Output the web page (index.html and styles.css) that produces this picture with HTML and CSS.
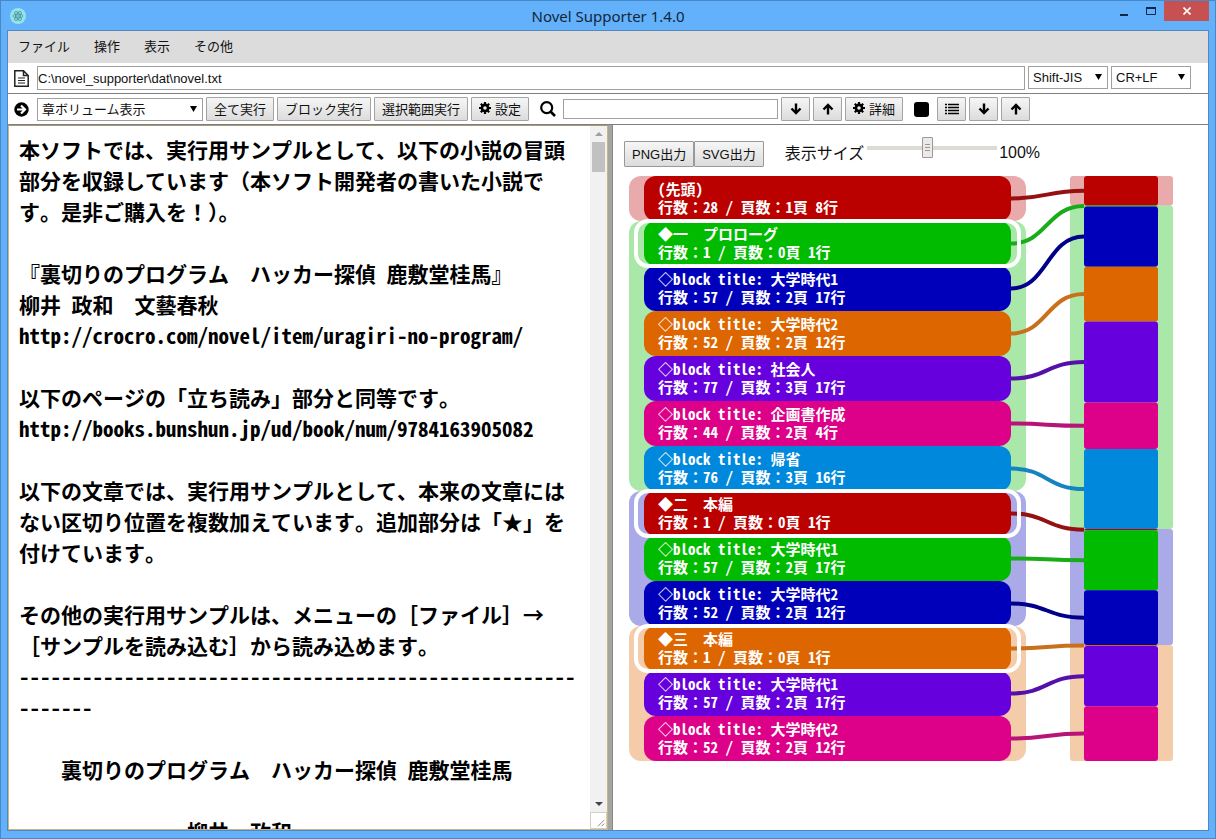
FILE: index.html
```html
<!DOCTYPE html>
<html lang="ja">
<head>
<meta charset="utf-8">
<title>Novel Supporter 1.4.0</title>
<link rel="stylesheet" href="styles.css">
</head>
<body>
<svg class="defs" aria-hidden="true">
  <symbol id="i-down" viewBox="0 0 12 12"><path d="M6 0.500v10M1.500 5.500 6 10l4.500-4.500" fill="none" stroke="#000" stroke-width="2.400"/></symbol>
  <symbol id="i-up" viewBox="0 0 12 12"><path d="M6 11.500V2M1.500 6.500 6 2l4.500 4.500" fill="none" stroke="#000" stroke-width="2.400"/></symbol>
  <symbol id="i-gear" viewBox="0 0 12 12"><circle cx="6" cy="6" r="3.100" fill="none" stroke="#000" stroke-width="2.600"/><path d="M6 0v2.500M6 9.500V12M0 6h2.500M9.500 6H12M1.800 1.800l1.700 1.700M8.500 8.500l1.700 1.700M1.800 10.200l1.700-1.700M8.500 3.500l1.700-1.700" stroke="#000" stroke-width="2.200"/></symbol>
  <symbol id="i-list" viewBox="0 0 14 12"><path d="M0 1.500h2M0 4.500h2M0 7.500h2M0 10.500h2M3 1.500h11M3 4.500h11M3 7.500h11M3 10.500h11" stroke="#000" stroke-width="1.700"/></symbol>
  <symbol id="i-tri" viewBox="0 0 7 6"><path d="M0 0h7L3.500 6z" fill="#000"/></symbol>
</svg>
<div class="window">
  <header class="titlebar">
    <svg class="app-icon" viewBox="0 0 16 16" aria-hidden="true"><circle cx="8" cy="8" r="8" fill="#93e4ea"/><g fill="none" stroke="#4b8f96" stroke-width=".8"><ellipse cx="8" cy="8" rx="5.200" ry="2"/><ellipse cx="8" cy="8" rx="5.200" ry="2" transform="rotate(60 8 8)"/><ellipse cx="8" cy="8" rx="5.200" ry="2" transform="rotate(120 8 8)"/></g><circle cx="8" cy="8" r=".8" fill="#4b8f96"/></svg>
    <h1 class="title">Novel Supporter 1.4.0</h1>
    <div class="controls">
      <button class="ctl" aria-label="最小化"><svg width="10" height="12" viewBox="0 0 10 12"><path d="M1 10h8" stroke="#0b2a4a" stroke-width="2"/></svg></button>
      <button class="ctl" aria-label="最大化"><svg width="10" height="12" viewBox="0 0 10 12"><path d="M.5 2v7.500h9V2" fill="none" stroke="#0b2a4a"/><path d="M0 3h10" stroke="#0b2a4a" stroke-width="2"/></svg></button>
      <button class="ctl ctl-close" aria-label="閉じる"><svg width="8" height="8" viewBox="0 0 8 8"><path d="M.5.5l7 7M7.500.5l-7 7" stroke="#fff" stroke-width="1.600"/></svg></button>
    </div>
  </header>
  <main class="client">
    <nav class="menubar">
      <button class="menu">ファイル</button><button class="menu">操作</button><button class="menu">表示</button><button class="menu">その他</button>
    </nav>
    <div class="bar pathbar">
      <svg class="lead" viewBox="0 0 15 17" aria-hidden="true"><path d="M.8.8h8.700l4.700 4.700v10.700H.8zM9.500.8v4.700h4.700" fill="none" stroke="#222" stroke-width="1.500"/><path d="M4 8h7M4 10.500h7M4 13h7" stroke="#222" stroke-width="1.200"/></svg>
      <input class="field path" type="text" aria-label="ファイルパス" value="C:\novel_supporter\dat\novel.txt">
      <span class="drop drop-code"><select aria-label="文字コード"><option>Shift-JIS</option></select><svg><use href="#i-tri"/></svg></span>
      <span class="drop drop-code"><select aria-label="改行コード"><option>CR+LF</option></select><svg><use href="#i-tri"/></svg></span>
    </div>
    <div class="bar toolbar">
      <svg class="lead" viewBox="0 0 15 17" aria-hidden="true"><circle cx="7.500" cy="8.500" r="7.200"/><path d="M3 8.500h7.500M7 4.500l4 4-4 4" fill="none" stroke="#fff" stroke-width="2.200"/></svg>
      <span class="drop drop-mode"><select aria-label="処理"><option>章ボリューム表示</option></select><svg><use href="#i-tri"/></svg></span>
      <button class="btn">全て実行</button>
      <button class="btn">ブロック実行</button>
      <button class="btn">選択範囲実行</button>
      <button class="btn"><svg class="ico"><use href="#i-gear"/></svg>設定</button>
      <svg class="search-ico" viewBox="0 0 16 16" aria-hidden="true"><circle cx="6.700" cy="6.700" r="5.500" fill="none" stroke="#000" stroke-width="2.200"/><path d="M10.500 10.500l4.500 4.500" stroke="#000" stroke-width="2.600"/></svg>
      <input class="field search" type="text" aria-label="検索">
      <button class="btn btn-icon" aria-label="次を検索"><svg class="ico"><use href="#i-down"/></svg></button>
      <button class="btn btn-icon" aria-label="前を検索"><svg class="ico"><use href="#i-up"/></svg></button>
      <button class="btn"><svg class="ico"><use href="#i-gear"/></svg>詳細</button>
      <span class="swatch"></span>
      <button class="btn btn-icon" aria-label="一覧"><svg class="ico ico-list"><use href="#i-list"/></svg></button>
      <button class="btn btn-icon" aria-label="次へ"><svg class="ico"><use href="#i-down"/></svg></button>
      <button class="btn btn-icon" aria-label="前へ"><svg class="ico"><use href="#i-up"/></svg></button>
    </div>
    <div class="panes">
      <section class="editor">
        <textarea class="text" aria-label="本文" spellcheck="false">本ソフトでは、実行用サンプルとして、以下の小説の冒頭
部分を収録しています（本ソフト開発者の書いた小説で
す。是非ご購入を！）。

『裏切りのプログラム　ハッカー探偵 鹿敷堂桂馬』
柳井 政和　文藝春秋
http://crocro.com/novel/item/uragiri-no-program/

以下のページの「立ち読み」部分と同等です。
http://books.bunshun.jp/ud/book/num/9784163905082

以下の文章では、実行用サンプルとして、本来の文章には
ない区切り位置を複数加えています。追加部分は「★」を
付けています。

その他の実行用サンプルは、メニューの［ファイル］→
［サンプルを読み込む］から読み込めます。
-----------------------------------------------------
-------

　　裏切りのプログラム　ハッカー探偵 鹿敷堂桂馬

　　　　　　　　柳井　政和</textarea>
        <div class="scroll" aria-hidden="true">
          <svg class="arrow" viewBox="0 0 8 4"><path d="M0 4h8L4 0z" fill="#a0a0a0"/></svg>
          <div class="thumb"></div>
          <svg class="arrow arrow-down" viewBox="0 0 8 4"><path d="M0 0h8L4 4z" fill="#444"/></svg>
          <svg class="grip" viewBox="0 0 17 17"><path d="M8 15l7-7M12 15l3-3" stroke="#777"/></svg>
        </div>
      </section>
      <div class="splitter"></div>
      <section class="view">
        <div class="view-tools">
          <button class="btn btn-out">PNG出力</button><button class="btn btn-out">SVG出力</button>
          <label class="size-label" for="size">表示サイズ</label>
          <input class="slider" id="size" type="range" min="10" max="200" value="98">
          <output class="size-value" for="size">100%</output>
        </div>
        <svg class="chart" id="chart" width="544" height="585" role="img" aria-label="章ボリューム"></svg>
      </section>
    </div>
  </main>
</div>
<script src="chart.js"></script>
</body>
</html>
```
FILE: styles.css
```css
* { box-sizing: border-box; }
html, body { height: 100%; margin: 0; }
body { font-family: "Liberation Sans", "Noto Sans CJK JP", sans-serif; font-size: 13px; color: #111; }
button, input, select, textarea { font: inherit; color: inherit; margin: 0; }
svg { display: block; flex: none; }
.defs { position: absolute; width: 0; height: 0; }

.window { display: flex; flex-direction: column; height: 100vh; padding: 0 6px 7px; background: #63b1fb; border: 1px solid #4689c8; }
.titlebar { display: grid; grid-template-columns: 1fr auto 1fr; height: 29px; align-items: center; }
.app-icon { width: 16px; height: 16px; margin-left: 3px; }
.title { margin: 0; font: 400 15px "Noto Sans", "Open Sans", sans-serif; color: #12263c; }
.controls { display: flex; justify-content: flex-end; align-self: start; }
.ctl { display: grid; place-items: center; width: 27px; height: 20px; padding: 0; border: 0; background: none; }
.ctl-close { width: 45px; background: #c75050; }

.client { display: flex; flex-direction: column; flex: 1; min-height: 0; border: 1px solid #5288bd; background: #fff; }
.menubar { display: flex; gap: 24px; height: 32px; padding: 0 10px 4px; background: #dcdcdc; flex: none; }
.menu { padding: 0; border: 0; background: none; }

.bar { display: flex; align-items: center; gap: 3px; height: 31px; padding: 0 17px 0 6px; border-bottom: 1px solid #808080; flex: none; }
.lead { width: 15px; height: 17px; margin-right: 5px; }
.field { min-width: 0; padding: 0 1px; border: 1px solid #a0a0a0; background: #fff; outline: 0; }
.path { flex: 1; height: 24px; padding: 0; }
.drop { position: relative; display: flex; height: 23px; }
.pathbar .drop { margin-bottom: 2px; }
.drop select { width: 100%; padding: 0 4px; border: 1px solid #a0a0a0; border-radius: 0; background: #fff; appearance: none; }
.drop svg { position: absolute; right: 6px; top: 8px; width: 7px; height: 6px; pointer-events: none; }
.drop-code { width: 80px; }
.drop-mode { width: 166px; }
.btn { display: flex; align-items: center; justify-content: center; gap: 4px; height: 24px; padding: 0 7px 2px; border: 1px solid #a3a3a3; border-radius: 1px; background: linear-gradient(#f6f6f6, #dcdcdc); white-space: nowrap; }
.btn-icon { width: 29px; padding: 0; }
.ico { width: 12px; height: 12px; }
.ico-list { width: 14px; }
.search-ico { width: 16px; height: 16px; margin: 0 4px 0 8px; }
.search { width: 215px; height: 20px; }
.swatch { width: 15px; height: 15px; margin: 0 5px 0 8px; border-radius: 3px; background: #000; }

.panes { display: flex; flex: 1; min-height: 0; }
.editor { display: flex; flex: 0 0 50%; border: 1px solid #c9b48a; border-top-color: #a59a78; }
.text { flex: 1; min-width: 0; padding: 8px 0 0 10px; border: 0; outline: 0; resize: none; overflow: hidden; white-space: pre; background: #fff; color: #000; font: 700 21px/31px "Noto Sans Mono CJK JP", "Noto Sans CJK JP", monospace; }
.scroll { display: flex; flex-direction: column; align-items: center; width: 17px; background: #f1f1f1; }
.arrow { width: 8px; height: 4px; margin: 6px 0; }
.thumb { width: 13px; height: 30px; background: #c1c1c1; }
.arrow-down { margin-top: auto; }
.grip { width: 17px; height: 17px; border: 1px solid #d6cfc0; background: #fff; }
.splitter { width: 5px; background: #a5a5a0; border-right: 1px solid #888; }
.view { flex: 1; min-width: 0; overflow: hidden; padding: 16px 11px; }
.view-tools { display: flex; align-items: center; height: 26px; }
.btn-out { height: 26px; padding: 0 7px 2px; border-color: #999; }
.size-label { margin: 0 0 4px 21px; font-size: 16px; }
.size-value { margin: 0 0 2px 2px; font-size: 16px; }
.slider { width: 130px; height: 21px; margin: 0 0 12px 3px; appearance: none; background: none; }
.slider::-webkit-slider-runnable-track { height: 4px; background: #dedbd7; }
.slider::-webkit-slider-thumb { appearance: none; width: 11px; height: 21px; margin-top: -9px; border: 1px solid #999; border-radius: 1px; background: linear-gradient(#999, #999) 50% 6px / 5px 1px no-repeat, linear-gradient(#999, #999) 50% 9px / 5px 1px no-repeat, linear-gradient(#999, #999) 50% 12px / 5px 1px no-repeat, #efe9e6; }
.chart { margin: 9px 0 0 5px; overflow: visible; }
.chart text { fill: #fff; font: 700 15px "Noto Sans Mono CJK JP", "Noto Sans CJK JP", monospace; white-space: pre; }
.halo { fill: none; stroke: #fff; stroke-width: 4px; }
.link { fill: none; stroke-width: 4px; }
```
FILE: chart.js
```js
const ROW = 45;
const palette = [
  { fill: '#bb0000', line: '#951010' },
  { fill: '#00bb00', line: '#18ac18' },
  { fill: '#0000bb', line: '#00008a' },
  { fill: '#dd6600', line: '#c8701c' },
  { fill: '#6600dd', line: '#5510aa' },
  { fill: '#dd0088', line: '#b81478' },
  { fill: '#0088dd', line: '#1484c0' }
];
const blocks = [
  ['(先頭)', 28, '1頁 8行'],
  ['◆一　プロローグ', 1, '0頁 1行'],
  ['◇block title: 大学時代1', 57, '2頁 17行'],
  ['◇block title: 大学時代2', 52, '2頁 12行'],
  ['◇block title: 社会人', 77, '3頁 17行'],
  ['◇block title: 企画書作成', 44, '2頁 4行'],
  ['◇block title: 帰省', 76, '3頁 16行'],
  ['◆二　本編', 1, '0頁 1行'],
  ['◇block title: 大学時代1', 57, '2頁 17行'],
  ['◇block title: 大学時代2', 52, '2頁 12行'],
  ['◆三　本編', 1, '0頁 1行'],
  ['◇block title: 大学時代1', 57, '2頁 17行'],
  ['◇block title: 大学時代2', 52, '2頁 12行']
];
const chapters = [[0, 1], [1, 7], [7, 10], [10, 13]];

const svg = document.getElementById('chart');
function add(name, attrs, text) {
  const el = document.createElementNS('http://www.w3.org/2000/svg', name);
  for (const key in attrs) el.setAttribute(key, attrs[key]);
  if (text) el.textContent = text;
  svg.appendChild(el);
}
function box(x, y, width, height, rx, fill, opacity) {
  add('rect', { x, y, width, height, rx, fill, 'fill-opacity': opacity });
}

const total = blocks.reduce((sum, b) => sum + b[1], 0);
const scale = ROW * blocks.length / total;
const tops = [0];
blocks.forEach((b, i) => tops.push(tops[i] + b[1] * scale));

chapters.forEach(([from, to], i) => {
  const fill = palette[i].fill;
  box(0, from * ROW, 397, (to - from) * ROW, 12, fill, 1 / 3);
  box(441, tops[from], 103, tops[to] - tops[from], 3, fill, 1 / 3);
});
blocks.forEach((b, i) => {
  const color = palette[i % palette.length];
  const y = i * ROW;
  const mid = y + ROW / 2;
  const end = (tops[i] + tops[i + 1]) / 2;
  box(15, y, 367, ROW, 12, color.fill, 1);
  box(455, tops[i], 74, b[1] * scale, 3, color.fill, 1);
  add('path', { class: 'link', stroke: color.line, d: `M382 ${mid}C418 ${mid} 418 ${end} 455 ${end}` });
});
blocks.forEach((b, i) => {
  const y = i * ROW;
  if (b[0][0] === '◆') add('rect', { class: 'halo', x: 7, y, width: 383, height: ROW, rx: 12 });
  add('text', { x: 29, y: y + 19 }, b[0]);
  add('text', { x: 29, y: y + 37 }, `行数：${b[1]} / 頁数：${b[2]}`);
});
```
